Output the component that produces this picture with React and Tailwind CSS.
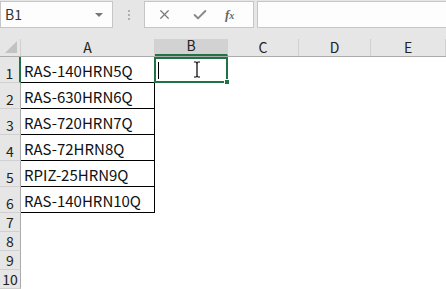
import { X, Check } from 'lucide-react'

const COLS = [
  { id: 'A', w: 'w-[134px]' },
  { id: 'B', w: 'w-[73px]' },
  { id: 'C', w: 'w-[71px]' },
  { id: 'D', w: 'w-[72px]' },
  { id: 'E', w: 'flex-1' },
]

const DATA = ['RAS-140HRN5Q', 'RAS-630HRN6Q', 'RAS-720HRN7Q', 'RAS-72HRN8Q', 'RPIZ-25HRN9Q', 'RAS-140HRN10Q']

const font = { fontFamily: '"Noto Sans CJK SC", "Liberation Sans", sans-serif' }

function Toolbar() {
  return (
    <div className="h-[39px] bg-[#e6e6e6] flex items-start pt-[1px]">
      <div className="w-[113px] h-[27px] bg-[#fdfdfd] border border-[#c6c6c6] flex items-center pl-[4px] pr-[9px] text-[14px] text-[#333]">
        <span className="flex-1">B1</span>
        <span className="w-0 h-0 border-l-[4px] border-r-[4px] border-t-[4px] border-l-transparent border-r-transparent border-t-[#777]" />
      </div>
      <div className="w-[31px] h-[27px] flex flex-col items-center justify-center gap-[2px]">
        <span className="w-[2px] h-[2px] bg-[#b0b0b0]" />
        <span className="w-[2px] h-[2px] bg-[#b0b0b0]" />
        <span className="w-[2px] h-[2px] bg-[#b0b0b0]" />
      </div>
      <div className="w-[110px] h-[27px] bg-[#fdfdfd] border border-[#c6c6c6] flex items-center text-[#7a7a7a]">
        <X size={15} strokeWidth={2} className="ml-[12px]" />
        <Check size={16} strokeWidth={3} className="ml-[20px] text-[#8a8a8a]" />
        <span className="ml-[17px] text-[13px] italic font-bold text-[#666]" style={{ fontFamily: '"Liberation Serif", serif' }}>f<span className="text-[10px]">x</span></span>
      </div>
      <div className="ml-[3px] flex-1 h-[27px] bg-[#fdfdfd] border border-[#c6c6c6] border-r-0" />
    </div>
  )
}

export default function App() {
  return (
    <div className="w-[446px] h-[289px] overflow-hidden bg-white" style={font}>
      <Toolbar />
      <div className="flex h-[18px] bg-[#e6e6e6] border-b border-[#ababab] text-[14px] text-[#222]">
        <div className="w-[21px] flex items-end justify-end pr-[3px] pb-[3px] border-r border-[#d0d0d0]">
          <svg width="12" height="12" viewBox="0 0 12 12">
            <polygon points="12,0 12,12 0,12" fill="#c2c2c2" />
          </svg>
        </div>
        {COLS.map(c => (
          <div
            key={c.id}
            className={`${c.w} flex items-end justify-center leading-none pb-[2px] border-r border-[#d0d0d0] ${c.id === 'B' ? 'bg-[#d2d2d2] border-b-2 border-b-[#217346]' : ''}`}
          >
            {c.id}
          </div>
        ))}
      </div>
      {[1, 2, 3, 4, 5, 6, 7, 8, 9, 10].map(r => {
        const tall = r <= 6
        return (
          <div key={r} className={`flex ${tall ? 'h-[26px]' : 'h-[19px]'}`}>
            <div className={`w-[21px] bg-[#e6e6e6] border-b border-[#d0d0d0] flex items-end justify-center text-[14px] leading-none pb-[2px] text-[#222] ${r === 1 ? 'border-r-2 border-r-[#217346]' : 'border-r border-r-[#ababab]'}`}>
              {r}
            </div>
            <div className={`w-[134px] flex items-end pl-[3px] pb-[4px] text-[15px] leading-none text-[#111] ${tall ? 'border-r border-b border-black' : ''}`}>
              {tall ? DATA[r - 1] : ''}
            </div>
            {r === 1 ? (
              <div className="w-[74px] -ml-[1px] relative border-2 border-[#217346]">
                <span className="absolute left-[2px] top-[3px] w-[1px] h-[17px] bg-black" />
                <svg className="absolute left-[37px] top-[2px]" width="8" height="17" viewBox="0 0 8 17">
                  <path d="M1 1h2.5M4.5 1H7M4 1.5v14M1 16h2.5M4.5 16H7M3.3 1.5l0.7 0.6 0.7-0.6M3.3 15.5l0.7-0.6 0.7 0.6" stroke="#000" strokeWidth="1.2" fill="none" />
                </svg>
                <span className="absolute -right-[4px] -bottom-[4px] w-[6px] h-[6px] bg-[#217346] border border-white" />
              </div>
            ) : null}
          </div>
        )
      })}
    </div>
  )
}
